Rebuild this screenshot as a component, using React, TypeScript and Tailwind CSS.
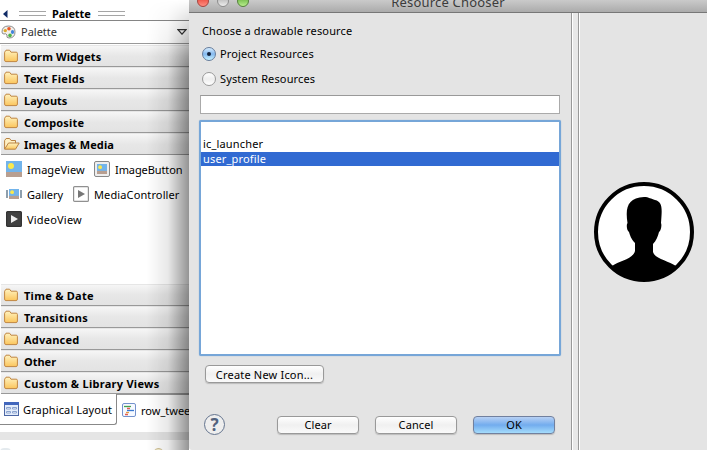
import React from "react";

function Folder({ open = false }: { open?: boolean }) {
  return (
    <svg width="16" height="14" viewBox="0 0 16 14" className="shrink-0">
      <defs>
        <linearGradient id="folder" x1="0" y1="0" x2="0" y2="1">
          <stop offset="0" stopColor="#fff3c0" />
          <stop offset="1" stopColor="#fbc55c" />
        </linearGradient>
      </defs>
      {open ? (
        <g stroke="#b98242" strokeLinejoin="round">
          <path d="M.6 12V3.5L2.1 1.5H5.6L7.1 3.5H11.5V6" fill="#fff0c4" />
          <path d="M.6 12.2L4.5 6H15.2L11.5 12.2Z" fill="url(#folder)" />
        </g>
      ) : (
        <path d="M.6 11V3.2L2 1.2H5.6L7 3.2H12.2Q13.4 3.2 13.4 4.4V11Q13.4 12.6 12.1 12.6H1.9Q.6 12.6 .6 11Z" fill="url(#folder)" stroke="#c18743" />
      )}
    </svg>
  );
}

function Drawer({ label, track, open }: { label: string; track: string; open?: boolean }) {
  return (
    <div className="flex h-[22px] items-center border-t border-b border-t-[#e6e6e6] border-b-[#999] bg-linear-to-b from-[#f6f6f6] via-[#e7e7e7] to-[#e3e3e3] pl-[3px] font-bold">
      <Folder open={open} />
      <span className={`ml-[4px] ${track}`}>{label}</span>
    </div>
  );
}

function Scene({ small = false }: { small?: boolean }) {
  return (
    <svg width={small ? 10 : 16} height={small ? 10 : 16} viewBox="0 0 16 16" className="shrink-0">
      <rect width="16" height="16" fill="#72b4eb" />
      <rect y="11" width="16" height="5" fill="#b89f91" />
      <circle cx="5" cy="5" r="3" fill="#fbe84c" />
    </svg>
  );
}

function Play({ dark = false }: { dark?: boolean }) {
  return (
    <svg width="16" height="16" viewBox="0 0 16 16" className="shrink-0">
      <rect x=".6" y=".6" width="14.8" height="14.8" rx="1" fill={dark ? "#414141" : "#fff"} stroke={dark ? "#333" : "#909090"} strokeWidth="1.2" />
      <path d="M5 4L12 8L5 12Z" fill={dark ? "#eee" : "#777"} />
    </svg>
  );
}

function Grip() {
  return <div className="h-[5px] w-[27px] border-y border-[#a5a5a5]" />;
}

function PalettePanel() {
  return (
    <div className="relative h-[450px] w-[189px] shrink-0 overflow-hidden bg-white">
      <div className="flex h-[21px] items-center border-b border-[#858585] pt-[7px] pl-[3px]">
        <svg width="5" height="8" viewBox="0 0 5 8"><path d="M4.5 0V8L0 4Z" fill="#102b66" /></svg>
        <div className="ml-[11px]"><Grip /></div>
        <span className="ml-[6px] w-[46px] font-bold tracking-[-0.1px]">Palette</span>
        <Grip />
      </div>
      <div className="flex h-[23px] items-center border-b border-[#999] pb-px pl-[1px]">
        <svg width="15" height="14" viewBox="0 0 15 14">
          <path d="M1 7Q1 1 7.5 1Q14 1 14 7T8 13Q5 13 6 10Q5 8 3 9Q1 9 1 7Z" fill="#f2efea" stroke="#8d8d8d" />
          <circle cx="8" cy="3.8" r="1.8" fill="#e9582a" />
          <ellipse cx="11.5" cy="7" rx="1.6" ry="2.1" fill="#3f83dc" />
          <circle cx="4.3" cy="5.6" r="1.7" fill="#dda82a" />
          <circle cx="9" cy="10.4" r="1.8" fill="#4cb546" />
        </svg>
        <span className="ml-[5px] text-[#333]">Palette</span>
        <svg width="10" height="6" viewBox="0 0 10 6" className="mr-[2px] ml-auto"><path d="M1 .7H9L5 5.2Z" fill="#fff" stroke="#333" strokeWidth="1.2" /></svg>
      </div>
      <div className="ml-px pt-px">
        <Drawer label="Form Widgets" track="tracking-[0.1px]" />
        <Drawer label="Text Fields" track="tracking-[0.3px]" />
        <Drawer label="Layouts" track="tracking-[0px]" />
        <Drawer label="Composite" track="tracking-[0.17px]" />
        <Drawer label="Images & Media" track="tracking-[0.12px]" open />
        <div className="flex h-[129px] flex-col gap-[9px] pt-[6px] pl-[5px]">
          <div className="flex h-4 items-center"><Scene /><span className="ml-[5px] w-[67px] tracking-[0.06px]">ImageView</span>
            <div className="flex h-4 w-4 items-center justify-center rounded-[2px] border border-[#888] bg-[#eee]"><Scene small /></div><span className="ml-[5px] tracking-[-0.1px]">ImageButton</span></div>
          <div className="flex h-4 items-center">
            <div className="flex h-4 w-4 items-center justify-between"><i className="h-2 w-0.5 bg-[#8e9fad]" /><Scene small /><i className="h-2 w-0.5 bg-[#8e9fad]" /></div>
            <span className="ml-[5px] w-[46px]">Gallery</span><Play /><span className="ml-[5px] tracking-[0.12px]">MediaController</span></div>
          <div className="flex h-4 items-center"><Play dark /><span className="ml-[5px] tracking-[0.2px]">VideoView</span></div>
        </div>
        <Drawer label="Time & Date" track="tracking-[0.27px]" />
        <Drawer label="Transitions" track="tracking-[0.32px]" />
        <Drawer label="Advanced" track="tracking-[0.19px]" />
        <Drawer label="Other" track="tracking-[0px]" />
        <Drawer label="Custom & Library Views" track="tracking-[0.27px]" />
      </div>
      <div className="flex h-[38px]">
        <div className="flex h-[31px] w-[117px] shrink-0 items-center rounded-br-[3px] border-r border-b border-[#888] pl-1">
          <svg width="15" height="14" viewBox="0 0 15 14" className="shrink-0"><rect x=".5" y=".5" width="14" height="13" fill="#e4edfb" stroke="#4c67a5" /><path d="M0 1.5H15" stroke="#4267bd" strokeWidth="3" /><path d="M2.5 5.5H6.5V7H2.5ZM8.5 5.5H12.5V7H8.5ZM2.5 9.5H6.5V11H2.5ZM8.5 9.5H12.5V11H8.5Z" fill="#fff" stroke="#8aa3cf" /></svg>
          <span className="ml-1 tracking-[0.13px]">Graphical Layout</span>
        </div>
        <div className="flex h-[31px] flex-1 items-center border-t border-[#999] pl-[5px]">
          <svg width="14" height="14" viewBox="0 0 14 14" className="shrink-0"><rect x=".5" y=".5" width="13" height="13" rx="1.5" fill="#f6f9ff" stroke="#7492cc" /><path d="M2 3.5H9" stroke="#44a14b" strokeWidth="1.3" /><path d="M5 5.5H8M3 11.5H6" stroke="#e45b50" strokeWidth="1.3" /><path d="M5 7.5H12" stroke="#3978d0" strokeWidth="1.3" /><path d="M4 9.5H7" stroke="#e49b42" strokeWidth="1.3" /></svg>
          <span className="ml-[5px]">row_twee</span>
        </div>
      </div>
      <div className="h-2 bg-[#e5e5e5]" />
      <div className="flex items-end gap-[143px] pt-[8px]"><i className="h-2 w-[11px] rounded-t bg-[#e4eaee]" /><i className="h-2 w-[9px] rounded-t border border-[#d2c39a] bg-[#f3eccb]" /></div>
      <div className="absolute inset-y-0 right-0 w-[42px] mask-t-from-85% bg-linear-to-r from-black/0 via-black/9 to-black/42" />
    </div>
  );
}

function Radio({ label, checked }: { label: string; checked?: boolean }) {
  return (
    <div className="flex h-[25px] items-center">
      <span className={`flex size-[14px] items-center justify-center rounded-full border ${checked ? "border-[#657c9b] bg-linear-to-b from-[#d7edff] via-[#84b9ee] to-[#c7f2ff]" : "border-[#9a9a9a] bg-linear-to-b from-white via-[#eee] to-white"}`}>
        {checked && <i className="size-1 rounded-full bg-[#13233b]" />}
      </span>
      <span className="ml-1 tracking-[0.13px]">{label}</span>
    </div>
  );
}

function Button({ label, size = "w-[82px]", track = "tracking-[0.1px]", primary }: { label: string; size?: string; track?: string; primary?: boolean }) {
  return (
    <button className={`flex h-[18px] items-center justify-center rounded-[4px] border shadow-[0_1px_1px_#bbb] ${size} ${track} ${primary ? "border-[#71809e] bg-linear-to-b from-[#b7d0f3] via-[#72acee] to-[#a5dcfb]" : "border-[#999] bg-linear-to-b from-white via-[#f0f0f0] to-[#fafafa]"}`}>{label}</button>
  );
}

function Chooser() {
  return (
    <div className="flex h-[450px] w-[518px] flex-col overflow-hidden rounded-bl-[3px] bg-[#e4e4e4]">
      <div className="relative flex h-[13px] shrink-0 justify-center border-b border-[#777] bg-linear-to-b from-[#cacaca] to-[#ababab]">
        <div className="absolute -top-[5px] left-[8px] flex gap-2">
          <i className="size-3 rounded-full border border-[#a6443f] bg-linear-to-b from-[#e42d25] to-[#ff8d81]" />
          <i className="size-3 rounded-full border border-[#8d8d8d] bg-linear-to-b from-[#aaa] to-[#eee]" />
          <i className="size-3 rounded-full border border-[#54813b] bg-linear-to-b from-[#58a62d] to-[#b8ef8c]" />
        </div>
        <span className="-mt-[7px] text-[13px] leading-[18px] tracking-[0.2px] text-[#3c3c3c]">Resource Chooser</span>
      </div>
      <div className="flex min-h-0 flex-1">
        <div className="w-[382px] px-[10px] pt-[10px]">
          <div className="h-[18px] pl-[3px] leading-[16px] tracking-[0.16px]">Choose a drawable resource</div>
          <div className="pl-[3px]"><Radio label="Project Resources" checked /><Radio label="System Resources" /></div>
          <div className="mt-[4px] ml-px h-[19px] w-[360px] border border-[#aaa] border-t-[#999] bg-white" />
          <div className="mt-[6px] h-[236px] w-[362px] rounded-[2px] border-2 border-[#76a6d8] bg-white pt-[15px] leading-[15px] tracking-[0.17px] shadow-[0_0_1px_#76a6d8]">
            <div className="h-[15px] pl-[2px] leading-[13px]">ic_launcher</div>
            <div className="h-[14px] bg-[#316ad2] pl-[2px] leading-[13px] text-white">user_profile</div>
          </div>
          <div className="mt-[9px] ml-[6px]"><Button label="Create New Icon..." size="w-[119px]" track="tracking-[0.19px]" /></div>
          <div className="mt-[31px] ml-[5px] flex items-center">
            <div className="flex size-[21px] items-center justify-center rounded-full border-[1.5px] border-[#64748e] bg-[#eee] text-[17px] leading-none font-bold text-[#52627e]">?</div>
            <div className="ml-[52px] flex gap-4"><Button label="Clear" /><Button label="Cancel" /><Button label="OK" primary /></div>
          </div>
        </div>
        <div className="w-[8px] border-x border-[#999] bg-[#e8e8e8] shadow-[1px_0_0_white,inset_1px_0_0_white]" />
        <div className="flex flex-1 items-center justify-center">
          <svg width="100" height="100" viewBox="0 0 100 100" className="ml-px">
            <circle cx="50" cy="50" r="48" fill="white" stroke="black" strokeWidth="4" />
            <path d="M18 84C25 79 39 77 41 69V61C37 57 36 53 35 50C33 49 32 43 33.5 41C31 25 34 16 50 15C55 15 57 17 61 18C69 20 68 27 67 41C68 43 67 49 65 50C64 54 62 59 59 62V70C61 77 75 79 82 84Q68 98 50 98T18 84Z" fill="black" />
          </svg>
        </div>
      </div>
    </div>
  );
}

export default function App() {
  return (
    <main className="flex h-[450px] w-[707px] overflow-hidden bg-white font-['Noto_Sans',sans-serif] text-[11px] leading-[15px] whitespace-nowrap text-black">
      <PalettePanel />
      <Chooser />
    </main>
  );
}
